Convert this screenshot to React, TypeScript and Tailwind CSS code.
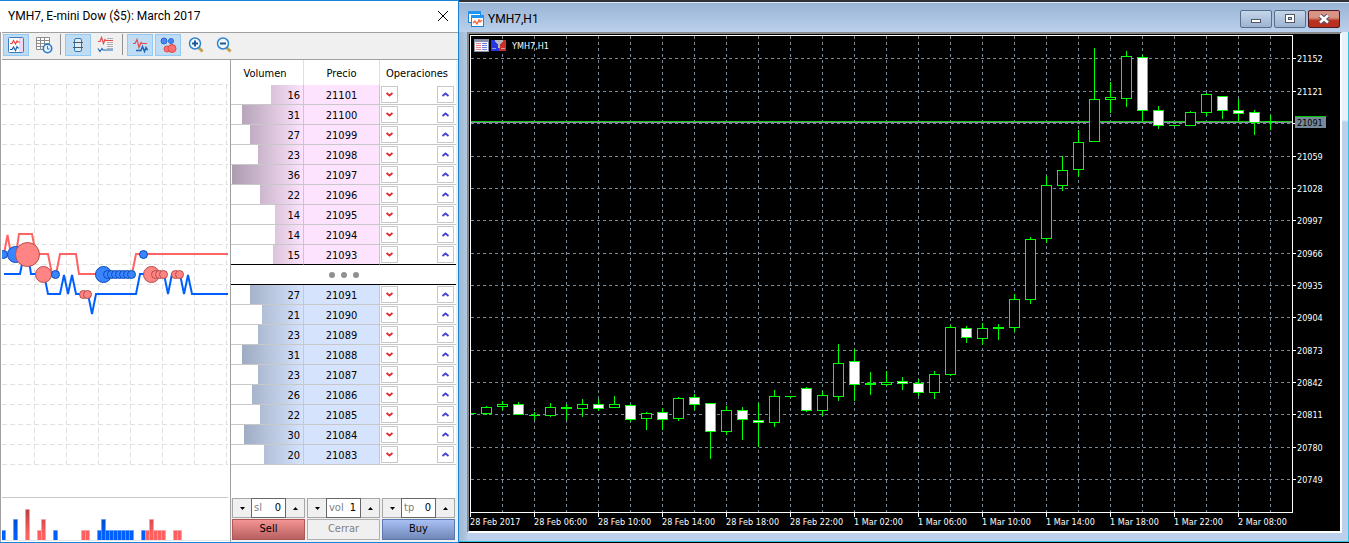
import { useState } from 'react';
import type { ReactNode } from 'react';

type Side = 'ask' | 'bid';

const asks = [
  [16, 21101],
  [31, 21100],
  [27, 21099],
  [23, 21098],
  [36, 21097],
  [22, 21096],
  [14, 21095],
  [14, 21094],
  [15, 21093],
];

const bids = [
  [27, 21091],
  [21, 21090],
  [23, 21089],
  [31, 21088],
  [23, 21087],
  [26, 21086],
  [22, 21085],
  [30, 21084],
  [20, 21083],
];

const FULL_BAR = 36.5;

// body top, body bottom, wick top, wick bottom, filled
const candles = [
  [413, 413, 413, 413, 0],
  [407, 413, 406, 414, 0],
  [404, 406, 401, 409, 0],
  [404, 414, 402, 414, 1],
  [415, 415, 412, 419, 0],
  [407, 415, 403, 416, 0],
  [407, 408, 404, 419, 0],
  [404, 408, 399, 416, 0],
  [404, 408, 399, 410, 1],
  [404, 407, 396, 407, 0],
  [405, 419, 404, 421, 1],
  [413, 418, 412, 429, 0],
  [412, 419, 408, 429, 1],
  [398, 418, 397, 420, 0],
  [397, 404, 394, 409, 1],
  [403, 431, 403, 458, 1],
  [410, 431, 406, 434, 0],
  [410, 419, 407, 439, 1],
  [420, 422, 403, 446, 1],
  [396, 422, 390, 426, 0],
  [396, 396, 396, 397, 0],
  [388, 410, 387, 411, 1],
  [395, 410, 391, 415, 0],
  [363, 396, 344, 400, 0],
  [361, 384, 349, 400, 1],
  [383, 384, 372, 394, 0],
  [382, 384, 371, 385, 0],
  [381, 383, 377, 389, 1],
  [383, 392, 379, 395, 1],
  [374, 392, 371, 398, 0],
  [327, 374, 325, 375, 0],
  [328, 337, 326, 342, 1],
  [328, 338, 323, 344, 0],
  [327, 328, 324, 339, 0],
  [299, 327, 294, 331, 0],
  [239, 299, 237, 303, 0],
  [185, 238, 176, 242, 0],
  [170, 185, 156, 190, 0],
  [142, 169, 130, 176, 0],
  [99, 141, 48, 141, 0],
  [97, 99, 82, 112, 0],
  [56, 98, 51, 106, 0],
  [57, 110, 55, 120, 1],
  [110, 125, 106, 128, 1],
  [125, 125, 125, 125, 0],
  [112, 125, 111, 125, 0],
  [94, 112, 93, 115, 0],
  [96, 110, 96, 118, 1],
  [110, 113, 99, 120, 1],
  [112, 122, 110, 134, 1],
  [121, 121, 115, 129, 0],
];

const priceAxis = [
  [58, '21152'],
  [91, '21121'],
  [123, ''],
  [156, '21059'],
  [188, '21028'],
  [220, '20997'],
  [253, '20966'],
  [285, '20935'],
  [317, '20904'],
  [350, '20873'],
  [382, '20842'],
  [414, '20811'],
  [447, '20780'],
  [479, '20749'],
] as [number, string][];

const timeAxis = [
  '28 Feb 2017',
  '28 Feb 06:00',
  '28 Feb 10:00',
  '28 Feb 14:00',
  '28 Feb 18:00',
  '28 Feb 22:00',
  '1 Mar 02:00',
  '1 Mar 06:00',
  '1 Mar 10:00',
  '1 Mar 14:00',
  '1 Mar 18:00',
  '1 Mar 22:00',
  '2 Mar 08:00',
];

// x, y, radius, side
const deals = [
  [3, 254, 4, 'b'],
  [15, 254, 8, 'b'],
  [27, 254, 12, 's'],
  [43, 274, 8, 's'],
  [55, 274, 4, 'b'],
  [83, 294, 4, 's'],
  [87, 294, 4, 's'],
  [103, 274, 8, 'b'],
  [107, 274, 4, 'b'],
  [111, 274, 4, 'b'],
  [115, 274, 4, 'b'],
  [119, 274, 4, 'b'],
  [123, 274, 4, 'b'],
  [127, 274, 4, 'b'],
  [131, 274, 4, 'b'],
  [143, 254, 4, 'b'],
  [151, 274, 8, 's'],
  [155, 274, 4, 's'],
  [159, 274, 4, 's'],
  [163, 274, 4, 's'],
  [175, 274, 4, 's'],
  [179, 274, 4, 's'],
] as [number, number, number, string][];

// x, height, side
const volumes = [
  [3, 10, 'b'],
  [15, 21, 'b'],
  [27, 31, 's'],
  [39, 10, 's'],
  [43, 21, 's'],
  [55, 10, 'b'],
  [83, 10, 's'],
  [87, 10, 's'],
  [99, 10, 'b'],
  [103, 21, 'b'],
  [107, 10, 'b'],
  [111, 10, 'b'],
  [115, 10, 'b'],
  [119, 10, 'b'],
  [123, 10, 'b'],
  [127, 10, 'b'],
  [131, 10, 'b'],
  [143, 10, 'b'],
  [147, 10, 's'],
  [151, 21, 's'],
  [155, 10, 's'],
  [159, 10, 's'],
  [163, 10, 's'],
  [175, 10, 's'],
  [179, 10, 's'],
] as [number, number, string][];

function TickChart() {
  return (
    <svg className="block h-full w-full" role="img" aria-label="Ticks">
      <defs>
        <linearGradient id="volSell" gradientUnits="userSpaceOnUse" x1="0" y1="509" x2="0" y2="540">
          <stop offset="0" stopColor="#b83c3c" />
          <stop offset="0.8" stopColor="#ff6060" />
        </linearGradient>
        <linearGradient id="volBuy" gradientUnits="userSpaceOnUse" x1="0" y1="509" x2="0" y2="540">
          <stop offset="0" stopColor="#0040a8" />
          <stop offset="0.8" stopColor="#0060ff" />
        </linearGradient>
      </defs>
      <g transform="translate(-2 -60)">
        <g stroke="#e0e0e0" strokeDasharray="5 3" shapeRendering="crispEdges">
          {[34, 66, 98, 130, 162, 194, 226].map((x) => (
            <line key={x} x1={x + 0.5} x2={x + 0.5} y1="84" y2="465" />
          ))}
          {Array.from({ length: 20 }, (_, i) => 84.5 + i * 20).map((y) => (
            <line key={y} x1="2" x2="228" y1={y} y2={y} />
          ))}
        </g>
        <line x1="2" x2="228" y1="497.5" y2="497.5" stroke="#c8c8c8" />
        <polyline
          fill="none"
          stroke="#ff6464"
          strokeWidth="2"
          points="4,254 7.5,235 11,254 16,254 19,234 32,234 36,254 48,254 52,274 56,274 60,254 76,254 79,274 132,274 136,254 228,254"
        />
        <polyline
          fill="none"
          stroke="#0060ff"
          strokeWidth="2"
          points="4,274 20,274 24,254 28,254 31,274 44,274 48,294 60,294 64,275 68,294 72,275 76,294 88,294 92,314 96,294 136,294 140,274 164,274 168,294 172,274 180,274 184,294 188,275 192,294 228,294"
        />
        {deals.map(([x, y, r, side]) => (
          <circle
            key={x}
            cx={x + 0.5}
            cy={y + 0.5}
            r={r}
            fill={side === 's' ? '#ff8484' : '#3a84ff'}
            stroke={side === 's' ? '#b84c4c' : '#0a4cb8'}
          />
        ))}
        {volumes.map(([x, h, side]) => (
          <rect
            key={x}
            x={x - 1.5}
            y={540 - h + 0.5}
            width="4"
            height={h}
            fill={side === 's' ? 'url(#volSell)' : 'url(#volBuy)'}
            stroke={side === 's' ? '#ff9c9c' : '#5c9cff'}
            strokeOpacity="0.7"
          />
        ))}
        <line x1="2" x2="230" y1="540.5" y2="540.5" stroke="#e4e4e4" />
      </g>
    </svg>
  );
}

function CandleChart() {
  return (
    <svg className="block h-full w-full font-['DejaVu_Sans_Condensed','Noto_Sans',sans-serif] text-[9px]" role="img" aria-label="YMH7,H1">
      <g transform="translate(-469 -34)">
        <g stroke="#778899" strokeDasharray="3 3" shapeRendering="crispEdges">
          {Array.from({ length: 25 }, (_, i) => 502.5 + i * 32).map((x) => (
            <line key={x} x1={x} x2={x} y1="36" y2="512" />
          ))}
          {priceAxis.map(([y]) => (
            <line key={y} x1="471" x2="1292" y1={y + 0.5} y2={y + 0.5} />
          ))}
        </g>
        <g shapeRendering="crispEdges">
          <rect x="471" y="121" width="821" height="1" fill="#1fc41f" />
          <rect x="471" y="122" width="821" height="1" fill="#8090a0" />
          {candles.map(([top, bottom, high, low, filled], i) => {
            const x = 470 + i * 16;
            return (
              <g key={x}>
                <rect x={x} y={high} width="1" height={low - high + 1} fill="#00ff00" />
                {bottom - top < 2 ? (
                  <rect x={i === 0 ? x : x - 5} y={top} width={i === 0 ? 6 : 11} height={bottom - top + 1} fill="#00ff00" />
                ) : (
                  <rect
                    x={x - 4.5}
                    y={top + 0.5}
                    width="10"
                    height={bottom - top}
                    fill={filled ? '#ffffff' : '#000000'}
                    stroke="#00ff00"
                  />
                )}
              </g>
            );
          })}
          <rect x="470.5" y="35.5" width="822" height="477" fill="none" stroke="#ffffff" />
          {priceAxis.map(([y]) => (
            <rect key={y} x="1293" y={y} width="3" height="1" fill="#ffffff" />
          ))}
          {timeAxis.map((t, i) => (
            <rect key={t} x={470 + i * 64} y="513" width="1" height="4" fill="#ffffff" />
          ))}
          <rect x="1295" y="116" width="31" height="12" fill="#778899" />
          <rect x="1295" y="116" width="31" height="1" fill="#00c800" />
        </g>
        <g fill="#ffffff">
          {priceAxis.map(([y, label]) => (
            <text key={y} x="1297" y={y + 4}>{label}</text>
          ))}
          {timeAxis.map((t, i) => (
            <text key={t} x={470 + i * 64} y="525">{t}</text>
          ))}
          <text x="512" y="49">YMH7,H1</text>
        </g>
        <text x="1297" y="126" fill="#000000">21091</text>
        {/* one-click trading and depth of market marks */}
        <g shapeRendering="crispEdges">
          <rect x="474" y="39" width="15" height="13" fill="#8890a8" />
          <rect x="475" y="42" width="13" height="9" fill="#f4f4fc" />
          <path d="M476 43.5h5M476 45.5h5M476 47.5h5M476 49.5h5" stroke="#f08080" />
          <path d="M482 43.5h5M482 45.5h5M482 47.5h5M482 49.5h5" stroke="#7080f0" />
          <rect x="491" y="40" width="8" height="11" fill="#2838e0" />
          <rect x="499" y="40" width="7" height="11" fill="#c83030" />
          <path d="M495 40h8v2l-3 2v4h-2v-4l-3-2z" fill="#b8b8c0" />
          <path d="M492 48.5h4M501 48.5h4" stroke="#ffffff" strokeOpacity="0.5" />
        </g>
      </g>
    </svg>
  );
}

function ToolButton({ label, active, children }: { label: string; active?: boolean; children: ReactNode }) {
  return (
    <button
      type="button"
      aria-label={label}
      className={`flex h-[22px] w-[26px] items-center justify-center border ${
        active ? 'border-[#91c9f7] bg-[#c0dcf3]' : 'border-transparent'
      }`}
    >
      <svg width="18" height="18" viewBox="0 0 18 18" fill="none" className="shrink-0">
        {children}
      </svg>
    </button>
  );
}

function Toolbar() {
  return (
    <div className="flex h-[27px] items-start gap-[2px] border-t border-[#a0a0a0] bg-[#f0f0f0] pt-px pl-px">
      <ToolButton label="Gráfico de ticks" active>
        <rect x="1.5" y="1.5" width="15" height="15" rx="1" fill="#fff" stroke="#3c7cc0" />
        <path d="M12 2h4v14h-4z" fill="#f0d8f0" />
        <path d="M3 7.500h2l1.500-3 2 3.500 1.500-3 1 1h2" stroke="#f04040" strokeWidth="1.200" />
        <path d="M3 13.500h2l1.500-2.500 2 3.500 1.500-4 1 1.500h1" stroke="#1c64b4" strokeWidth="1.200" />
      </ToolButton>
      <ToolButton label="Tiempo y ventas">
        <path d="M1.500 1.500h13v12h-13z" fill="#fff" stroke="#8c8c8c" />
        <path d="M1.500 4.500h13M1.500 7.500h13M1.500 10.500h13M5.500 1.500v12M9.500 1.500v12" stroke="#8c8c8c" />
        <circle cx="12.500" cy="12.500" r="4.200" fill="#e4f2ff" stroke="#2c78c8" strokeWidth="1.600" />
        <path d="M12.500 10v3h2" stroke="#2c78c8" />
      </ToolButton>
      <span className="mr-[2px] ml-px h-[21px] w-px bg-[#909090]" />
      <ToolButton label="Profundidad" active>
        <rect x="5.500" y="2.500" width="7" height="13" rx="1.500" fill="#dcecf8" stroke="#3878b0" />
        <path d="M4 6.500h10M4 11.500h10" stroke="#505860" strokeWidth="1.200" />
      </ToolButton>
      <ToolButton label="Ticks y precios">
        <path d="M1 5.500h2l1.500-4 2 6 1.500-4 1 1h7" stroke="#e84848" strokeWidth="1.200" />
        <path d="M1 12.500l2 3 2-3 1 1.500h10" stroke="#1c64b4" strokeWidth="1.200" />
        <path d="M10 2.500h6M10 6.500h6M10 8.500h6M10 10.500h6M10 12.500h6" stroke="#b0b0b0" />
      </ToolButton>
      <span className="mr-[2px] ml-px h-[21px] w-px bg-[#909090]" />
      <ToolButton label="Líneas de ticks" active>
        <path d="M2 7.500h2l2-4 2 8 2-5 1 1h5" stroke="#e84848" strokeWidth="1.200" />
        <path d="M5 14.500h5l1.500-4 2 5 1.500-4 1 2h1" stroke="#1c64b4" strokeWidth="1.400" />
      </ToolButton>
      <ToolButton label="Operaciones" active>
        <circle cx="12" cy="5" r="2.500" fill="#4888f0" stroke="#2c68d0" />
        <circle cx="5" cy="5" r="3" fill="#4888f0" stroke="#2c68d0" />
        <circle cx="8" cy="13" r="3" fill="#ff7070" stroke="#e04848" />
        <circle cx="13" cy="12.500" r="4" fill="#ff7070" stroke="#e04848" />
      </ToolButton>
      <ToolButton label="Acercar">
        <path d="M11.500 11.500l4 4" stroke="#c0a050" strokeWidth="3" />
        <circle cx="8" cy="7.500" r="5.500" fill="#f4faff" stroke="#2c84d0" strokeWidth="1.500" />
        <path d="M5 7.500h6M8 4.500v6" stroke="#205890" strokeWidth="2" />
      </ToolButton>
      <ToolButton label="Alejar">
        <path d="M11.500 11.500l4 4" stroke="#c0a050" strokeWidth="3" />
        <circle cx="8" cy="7.500" r="5.500" fill="#f4faff" stroke="#2c84d0" strokeWidth="1.500" />
        <path d="M5 7.500h6" stroke="#205890" strokeWidth="2" />
      </ToolButton>
    </div>
  );
}

function BookRow({ volume, price, side, last }: { volume: number; price: number; side: Side; last?: boolean }) {
  const line = last ? 'border-b-black' : 'border-b-[#c8c8c8]';
  const button = 'flex h-[17px] w-[17px] items-center justify-center border border-[#c8c8c8] bg-white';

  return (
    <tr className="h-5">
      <td className={`border-r border-b border-r-[#c8c8c8] p-0 ${line}`}>
        <div
          className={`flex h-[19px] bg-linear-to-r ${
            side === 'ask' ? 'from-[#ab9aae] to-[#fde3fd]' : 'from-[#94a2b8] to-[#d6e3fd]'
          }`}
        >
          <span className="bg-white" style={{ width: `${100 - (volume / FULL_BAR) * 100}%` }} />
          <span className="ml-auto pr-[3px] leading-[22px]">{volume}</span>
        </div>
      </td>
      <td
        className={`border-r border-b border-r-[#c8c8c8] p-0 text-center ${line} ${
          side === 'ask' ? 'bg-[#fde3fd]' : 'bg-[#d6e3fd]'
        }`}
      >
        <div className="h-[19px] leading-[22px]">{price}</div>
      </td>
      <td className={`border-b p-0 ${line}`}>
        <div className="flex h-[19px] items-center justify-between pr-[2px] pl-px">
          <button type="button" aria-label={`Sell ${price}`} className={button}>
            <svg width="9" height="7" viewBox="0 0 9 7" fill="none">
              <path d="M1.500 2l3 2.500 3-2.500" stroke="#e02c34" strokeWidth="1.800" />
            </svg>
          </button>
          <button type="button" aria-label={`Buy ${price}`} className={button}>
            <svg width="9" height="7" viewBox="0 0 9 7" fill="none">
              <path d="M1.500 5l3-2.500 3 2.500" stroke="#4040d8" strokeWidth="1.800" />
            </svg>
          </button>
        </div>
      </td>
    </tr>
  );
}

function Spinner({ label, initial }: { label: string; initial: number }) {
  const [value, setValue] = useState(initial);

  return (
    <div className="flex h-5 flex-1 border border-[#a8a8a8] bg-[#f0f0f0]">
      <button
        type="button"
        aria-label={`${label} -`}
        onClick={() => setValue(Math.max(0, value - 1))}
        className="flex w-[18px] items-center justify-center"
      >
        <svg width="5" height="3" viewBox="0 0 5 3"><path d="M0 0h5L2.500 3z" fill="#000" /></svg>
      </button>
      <label className="-my-px flex min-w-0 flex-1 items-center border border-[#686868] bg-white px-[2px] text-[#808080]">
        {label}
        <input
          type="text"
          value={value}
          onChange={(e) => setValue(Number(e.target.value) || 0)}
          className="w-0 min-w-0 flex-1 pr-[2px] text-right text-black outline-none"
        />
      </label>
      <button
        type="button"
        aria-label={`${label} +`}
        onClick={() => setValue(value + 1)}
        className="flex w-[18px] items-center justify-center"
      >
        <svg width="5" height="3" viewBox="0 0 5 3"><path d="M0 3h5L2.500 0z" fill="#000" /></svg>
      </button>
    </div>
  );
}

function OrderBook() {
  return (
    <div className="flex w-[225px] flex-col">
      <table className="w-full table-fixed border-separate border-spacing-0">
        <colgroup>
          <col className="w-[73px]" />
          <col className="w-[76px]" />
          <col className="w-[76px]" />
        </colgroup>
        <thead>
          <tr className="h-[25px]">
            <th className="border-r border-[#e0e0e0] p-0 pt-[3px] pr-1 font-normal">Volumen</th>
            <th className="border-r border-[#e0e0e0] p-0 pt-[3px] font-normal">Precio</th>
            <th className="p-0 pt-[3px] pr-[2px] font-normal">Operaciones</th>
          </tr>
        </thead>
        <tbody>
          {asks.map(([volume, price], i) => (
            <BookRow key={price} volume={volume} price={price} side="ask" last={i === asks.length - 1} />
          ))}
          <tr className="h-5">
            <td colSpan={3} className="border-b border-black p-0">
              <div className="flex h-[19px] items-center justify-center gap-[6px]">
                <span className="h-[6px] w-[6px] rounded-full bg-[#909090]" />
                <span className="h-[6px] w-[6px] rounded-full bg-[#909090]" />
                <span className="h-[6px] w-[6px] rounded-full bg-[#909090]" />
              </div>
            </td>
          </tr>
          {bids.map(([volume, price]) => (
            <BookRow key={price} volume={volume} price={price} side="bid" />
          ))}
        </tbody>
      </table>
      <div className="mt-auto flex flex-col gap-px bg-[#f0f0f0] px-px pb-[2px]">
        <div className="flex gap-[2px]">
          <Spinner label="sl" initial={0} />
          <Spinner label="vol" initial={1} />
          <Spinner label="tp" initial={0} />
        </div>
        <div className="flex gap-[2px]">
          <button type="button" className="h-[21px] flex-1 border border-[#b05858] bg-linear-to-b from-[#f49494] to-[#b86060]">
            Sell
          </button>
          <button type="button" disabled className="h-[21px] flex-1 border border-[#b0b0b0] bg-[#f0f0f0] text-[#808080]">
            Cerrar
          </button>
          <button type="button" className="h-[21px] flex-1 border border-[#6078b0] bg-linear-to-b from-[#a8c0f4] to-[#7088b8]">
            Buy
          </button>
        </div>
      </div>
    </div>
  );
}

function DepthWindow() {
  return (
    <section className="flex w-[459px] shrink-0 flex-col border-t border-r border-b border-[#1883d7] bg-white font-['DejaVu_Sans_Condensed','Noto_Sans',sans-serif] text-[11px] text-black">
      <header className="flex h-[31px] items-center justify-between pr-[9px] pb-[2px] pl-2 font-[Roboto,'Open_Sans',sans-serif] text-xs">
        <h1>YMH7, E-mini Dow ($5): March 2017</h1>
        <button type="button" aria-label="Cerrar ventana">
          <svg width="12" height="12" viewBox="0 0 12 12"><path d="M1 1l10 10M11 1L1 11" stroke="#000" /></svg>
        </button>
      </header>
      <div className="flex flex-1 flex-col border-l border-[#a0a0a0] pl-px">
        <Toolbar />
        <div className="flex flex-1 border-t border-[#a0a0a0]">
          <div className="min-w-0 flex-1">
            <TickChart />
          </div>
          <div className="flex border-l border-[#a0a0a0]">
            <OrderBook />
            <div className="w-[2px] bg-[#f0f0f0]" />
          </div>
        </div>
      </div>
    </section>
  );
}

function ChartWindow() {
  const caption = 'flex h-[18px] w-8 items-center justify-center rounded-[2px] border';

  return (
    <section className="flex min-w-0 flex-1 flex-col border-t-2 border-b border-t-[#303038] border-b-black bg-[#bcd0ec]">
      <header className="flex h-[30px] items-center border-t border-[#e0eaf6] bg-linear-to-b from-[#9ab4d4] to-[#bad0ec] pr-[9px] pl-[9px] pt-[3px] font-[Roboto,'Open_Sans',sans-serif] text-xs text-black">
        <svg width="16" height="16" viewBox="0 0 16 16" fill="none">
          <rect x="0.500" y="0.500" width="12" height="11" fill="#fff" stroke="#1c84d8" />
          <path d="M0 0h13v3H0z" fill="#1c94f0" />
          <rect x="3.500" y="4.500" width="12" height="11" fill="#fff" stroke="#1c84d8" />
          <path d="M3 4h13v3H3z" fill="#1c94f0" />
          <path d="M5 12l2-2 2 3 2-4 1 2 2-2" stroke="#f06030" strokeWidth="1.300" />
        </svg>
        <h2 className="ml-1">YMH7,H1</h2>
        <div className="ml-auto flex gap-[2px]">
          <button type="button" aria-label="Minimizar" className={`${caption} border-[#54708c] bg-linear-to-b from-[#c4d6ea] to-[#9cb4d0]`}>
            <svg width="12" height="12" viewBox="0 0 12 12"><rect x="1.500" y="6.500" width="9" height="3" fill="#fff" stroke="#505868" /></svg>
          </button>
          <button type="button" aria-label="Maximizar" className={`${caption} border-[#54708c] bg-linear-to-b from-[#c4d6ea] to-[#9cb4d0]`}>
            <svg width="12" height="12" viewBox="0 0 12 12">
              <rect x="1.500" y="1.500" width="9" height="8" fill="#fff" stroke="#505868" />
              <rect x="4.500" y="4.500" width="3" height="2" fill="#b4c6dc" stroke="#505868" />
            </svg>
          </button>
          <button type="button" aria-label="Cerrar gráfico" className={`${caption} border-[#501820] bg-linear-to-b from-[#d89484] from-40% to-[#b83020] to-60%`}>
            <svg width="12" height="12" viewBox="0 0 12 12">
              <path d="M2 2.500l8 7M10 2.500l-8 7" stroke="#585068" strokeWidth="4.500" />
              <path d="M2 2.500l8 7M10 2.500l-8 7" stroke="#fff" strokeWidth="2.500" />
            </svg>
          </button>
        </div>
      </header>
      <div className="flex flex-1 border-r border-b border-[#30c4e0]">
        <div className="w-2 bg-linear-to-r from-[#a0b8d0] to-[#b0c8e0]" />
        <div className="mb-2 min-h-[499px] min-w-0 flex-1 border-2 border-t-[#888888] border-r-white border-b-white border-l-[#888888] bg-black">
          <CandleChart />
        </div>
        <div className="w-[6px] bg-linear-to-b from-[#e8f0fa] from-[88px] to-[#bcd0ec] to-[90px]" />
      </div>
    </section>
  );
}

export default function App() {
  return (
    <main className="flex min-h-screen">
      <DepthWindow />
      <ChartWindow />
    </main>
  );
}
